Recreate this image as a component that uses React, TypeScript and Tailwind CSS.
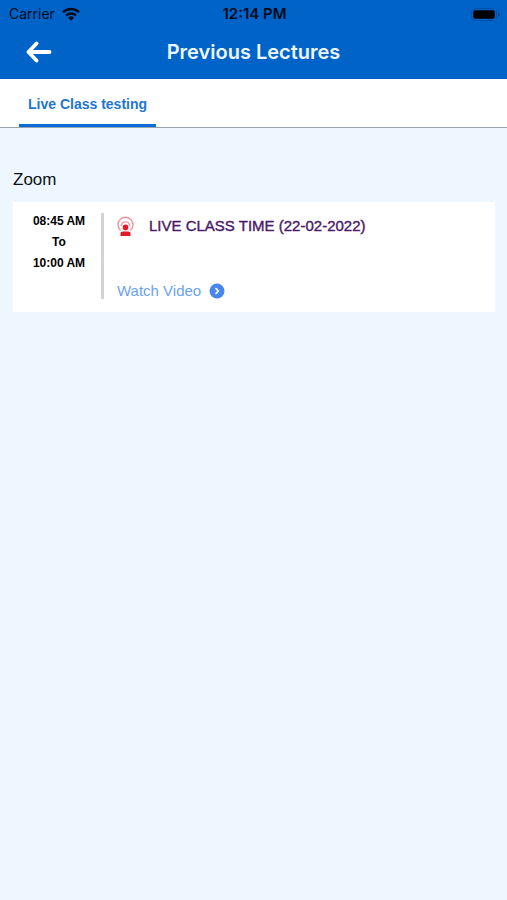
type Lecture = {
    id: number;
    title: string;
    from: string;
    to: string;
};

const tabs = ['Live Class testing'];

const lectures: Lecture[] = [
    {
        id: 1,
        title: 'LIVE CLASS TIME (22-02-2022)',
        from: '08:45 AM',
        to: '10:00 AM',
    },
];

function WifiIcon() {
    return (
        <svg viewBox="0 0 18 14" className="h-[14px] w-[18px]" fill="none" aria-hidden="true">
            <path d="M1 5.2a11.5 11.5 0 0 1 16 0" stroke="#020b1a" strokeWidth="2.5" />
            <path d="M4 8.5a7.2 7.2 0 0 1 10 0" stroke="#020b1a" strokeWidth="2.3" />
            <path d="M6 10.8a4.3 4.3 0 0 1 6 0L9 13.8Z" fill="#020b1a" />
        </svg>
    );
}

function BatteryIcon() {
    return (
        <svg viewBox="0 0 29 13" className="h-[13px] w-[29px]" fill="none" aria-hidden="true">
            <rect x="0.5" y="0.5" width="25" height="12" rx="3.5" stroke="#0252a8" />
            <rect x="2.2" y="2.2" width="21.6" height="8.6" rx="2" fill="#000" />
            <path d="M27 4.5c2 .6 2 3.4 0 4Z" fill="#02408c" />
        </svg>
    );
}

function BackIcon() {
    return (
        <svg viewBox="0 0 26 22" className="h-[22px] w-[26px]" fill="none" aria-hidden="true">
            <path
                d="M10.500 2.500 2.500 11l8 8.500M3 11h20.500"
                stroke="#fff"
                strokeWidth="3.8"
                strokeLinecap="round"
                strokeLinejoin="round"
            />
        </svg>
    );
}

function LiveIcon() {
    return (
        <svg viewBox="0 0 17 21" className="h-[21px] w-[17px]" fill="none" aria-hidden="true">
            <path
                d="M3.200 14A7.500 7.500 0 1 1 13.800 14"
                stroke="#f2959b"
                strokeWidth="1.4"
                strokeLinecap="round"
            />
            <path
                d="M4.300 9.300A4.300 4.300 0 0 1 12.700 9.300"
                stroke="#f2959b"
                strokeWidth="1.4"
                strokeLinecap="round"
            />
            <circle cx="8.5" cy="11.400" r="2.800" fill="#e01a26" />
            <path d="M3.500 20v-2.400c0-1.200.8-2 2-2h6c1.200 0 2 .8 2 2V20Z" fill="#e01a26" />
        </svg>
    );
}

function ChevronIcon() {
    return (
        <svg viewBox="0 0 16 16" className="size-4" fill="none" aria-hidden="true">
            <circle cx="8" cy="8" r="7.5" fill="#4a86f0" />
            <path
                d="m7 5.600 2.400 2.400L7 10.400"
                stroke="#fff"
                strokeWidth="1.7"
                strokeLinecap="round"
                strokeLinejoin="round"
            />
        </svg>
    );
}

function StatusBar() {
    return (
        <div className="grid h-7 grid-cols-3 items-center pr-[7px] pl-[9px] font-['Inter',sans-serif] text-sm text-[#020b1a]">
            <div className="flex items-center gap-[7px]">
                <span>Carrier</span>
                <WifiIcon />
            </div>
            <span className="text-center text-[15px] font-semibold">12:14 PM</span>
            <div className="flex justify-end">
                <BatteryIcon />
            </div>
        </div>
    );
}

function LectureCard({ lecture }: { lecture: Lecture }) {
    return (
        <li className="flex bg-white pt-[11px] pb-[13px]">
            <div className="flex w-[88px] shrink-0 flex-col pl-1 text-center text-xs leading-[21px] font-bold text-black">
                <span className="-mt-0.5">{lecture.from}</span>
                <span>To</span>
                <span>{lecture.to}</span>
            </div>
            <div className="flex h-[86px] grow flex-col justify-between border-l-[3px] border-[#d3d3d3] pl-[13px]">
                <div className="flex items-center gap-[15px] pt-0.5">
                    <LiveIcon />
                    <h3 className="text-[15px] text-[#4b1a68] [-webkit-text-stroke:0.4px_#4b1a68]">
                        {lecture.title}
                    </h3>
                </div>
                <a href="#watch" className="flex items-center gap-2 self-start text-[15px] leading-4 text-[#6ba3f0]">
                    Watch Video
                    <ChevronIcon />
                </a>
            </div>
        </li>
    );
}

export default function App() {
    return (
        <div className="min-h-screen bg-[#eef7ff] font-['Liberation_Sans',Arial,sans-serif]">
            <header className="bg-[#0063c8]">
                <StatusBar />
                <div className="grid h-[51px] grid-cols-[1fr_auto_1fr] items-center px-[26px]">
                    <button type="button" aria-label="Back" className="-mt-1 cursor-pointer justify-self-start">
                        <BackIcon />
                    </button>
                    <h1 className="-mt-1 font-['Inter',sans-serif] text-xl font-semibold text-[#eef6ff]">
                        Previous Lectures
                    </h1>
                </div>
            </header>

            <nav className="flex h-[49px] border-b border-[#9aa3ab] bg-white px-[19px]">
                {tabs.map((tab) => (
                    <button
                        key={tab}
                        type="button"
                        className="cursor-pointer border-b-[3px] border-[#0a6cd6] px-[9px] pt-1 text-sm font-bold text-[#2176d2]"
                    >
                        {tab}
                    </button>
                ))}
            </nav>

            <main className="pt-10 pr-3 pl-[13px]">
                <h2 className="text-[17px] leading-6 text-[#0d1116]">Zoom</h2>
                <ul className="mt-[10px]">
                    {lectures.map((lecture) => (
                        <LectureCard key={lecture.id} lecture={lecture} />
                    ))}
                </ul>
            </main>
        </div>
    );
}
